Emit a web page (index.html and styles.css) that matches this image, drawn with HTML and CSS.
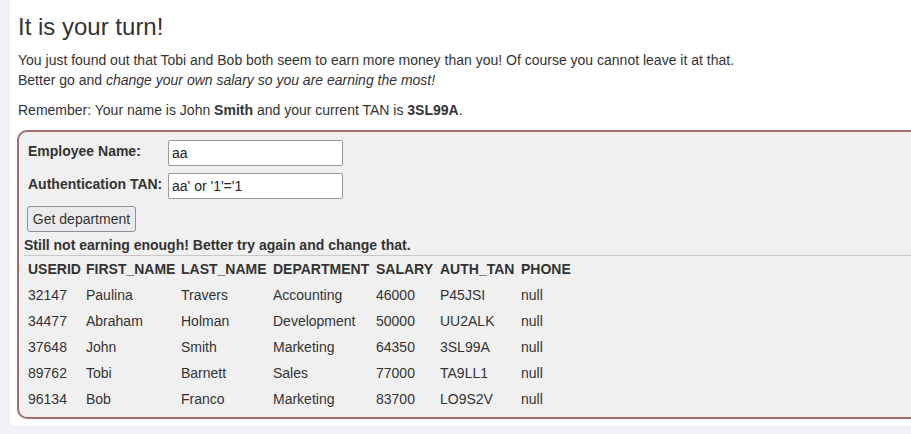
FILE: index.html
```html
<!DOCTYPE html>
<html>
<head>
<meta charset="utf-8">
<link rel="stylesheet" href="styles.css">
</head>
<body>
<div class="panel">
  <h3 class="title">It is your turn!</h3>
  <p class="para">You just found out that Tobi and Bob both seem to earn more money than you! Of course you cannot leave it at that.<br>Better go and <em>change your own salary so you are earning the most!</em></p>
  <p class="para">Remember: Your name is John <b>Smith</b> and your current TAN is <b>3SL99A</b>.</p>
  <div class="box">
    <div class="form">
      <label class="lbl">Employee Name:</label>
      <input class="inp" type="text" value="aa">
      <label class="lbl">Authentication TAN:</label>
      <input class="inp" type="text" value="aa' or '1'='1">
    </div>
    <button class="btn">Get department</button>
    <div class="msg">Still not earning enough! Better try again and change that.</div>
    <hr class="rule">
    <table class="data">
      <tr><th>USERID</th><th>FIRST_NAME</th><th>LAST_NAME</th><th>DEPARTMENT</th><th>SALARY</th><th>AUTH_TAN</th><th>PHONE</th></tr>
      <tr><td>32147</td><td>Paulina</td><td>Travers</td><td>Accounting</td><td>46000</td><td>P45JSI</td><td>null</td></tr>
      <tr><td>34477</td><td>Abraham</td><td>Holman</td><td>Development</td><td>50000</td><td>UU2ALK</td><td>null</td></tr>
      <tr><td>37648</td><td>John</td><td>Smith</td><td>Marketing</td><td>64350</td><td>3SL99A</td><td>null</td></tr>
      <tr><td>89762</td><td>Tobi</td><td>Barnett</td><td>Sales</td><td>77000</td><td>TA9LL1</td><td>null</td></tr>
      <tr><td>96134</td><td>Bob</td><td>Franco</td><td>Marketing</td><td>83700</td><td>LO9S2V</td><td>null</td></tr>
    </table>
  </div>
</div>
</body>
</html>
```
FILE: styles.css
```css
html, body {
  margin: 0;
  padding: 0;
  overflow: hidden;
}
body {
  background: #f0f2f5;
  font-family: "Liberation Sans", Arial, sans-serif;
  font-size: 14px;
  line-height: 20px;
  color: #333;
  width: 911px;
  height: 434px;
}
.panel {
  display: flow-root;
  margin-left: 10px;
  width: 1000px;
  background: #fff;
  padding: 0 0 7px 8px;
  border-bottom-left-radius: 4px;
}
.title {
  margin: 14px 0 10px;
  font-size: 24px;
  font-weight: normal;
  line-height: 26.4px;
  color: #333;
}
.para {
  margin: 0 0 10px;
}
.para em { font-style: italic; }
.box {
  margin-left: -1px;
  width: 960px;
  border: 2px solid #a36d6d;
  border-radius: 10px;
  background: #f0f0f0;
  padding: 8px 5px 5px;
}
.form {
  display: grid;
  grid-template-columns: 141px 175px;
  row-gap: 7px;
  margin-left: 3px;
  align-items: start;
}
.lbl {
  font-weight: bold;
  line-height: 20px;
  padding: 1px 0 0 1px;
}
.inp {
  box-sizing: border-box;
  width: 175px;
  height: 26px;
  border: 1px solid #9a9a9a;
  border-radius: 2px;
  padding: 1px 3px;
  font-family: "Liberation Sans", Arial, sans-serif;
  font-size: 14px;
  color: #222;
  background: #fff;
}
.btn {
  display: block;
  margin: 7px 0 0 3px;
  box-sizing: border-box;
  width: 109px;
  height: 26px;
  padding: 1px 4px;
  font-family: "Liberation Sans", Arial, sans-serif;
  font-size: 14px;
  color: #333;
  background: #ebebee;
  border: 1px solid #8f8f9d;
  border-radius: 3px;
}
.msg {
  font-weight: bold;
  margin-top: 3px;
  line-height: 20px;
}
.rule {
  margin: 0;
  border: 0;
  border-top: 1px solid #c8c8c8;
}
.data {
  border-collapse: collapse;
  margin-left: 2px;
  table-layout: fixed;
}
.data th, .data td {
  padding: 3px 2px;
  line-height: 20px;
  text-align: left;
  white-space: nowrap;
}
.data th { font-weight: bold; }
.data th:nth-child(1) { width: 54px; }
.data th:nth-child(2) { width: 91px; }
.data th:nth-child(3) { width: 88px; }
.data th:nth-child(4) { width: 99px; }
.data th:nth-child(5) { width: 60px; }
.data th:nth-child(6) { width: 77px; }
.data th:nth-child(7) { width: 60px; }
```
